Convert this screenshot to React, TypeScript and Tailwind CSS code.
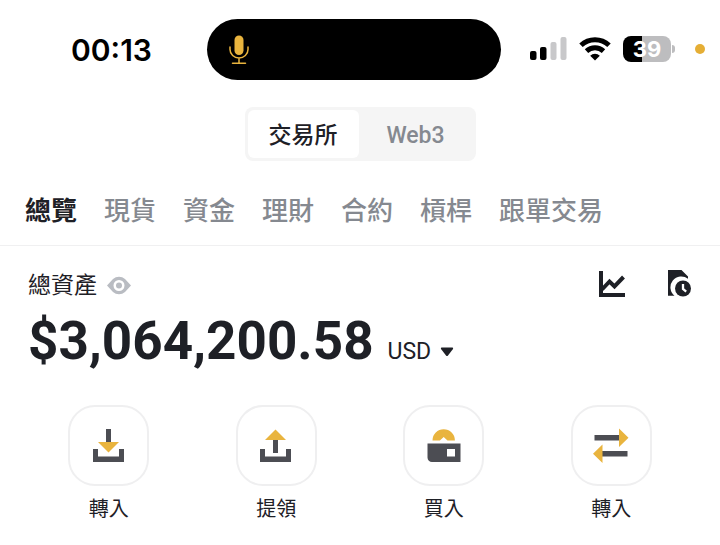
import type { ReactNode } from "react";

const TABS = ["總覽", "現貨", "資金", "理財", "合約", "槓桿", "跟單交易"];

const ACTIONS: { id: string; label: string; icon: ReactNode }[] = [
  { id: "deposit", label: "轉入", icon: <DepositIcon /> },
  { id: "withdraw", label: "提領", icon: <WithdrawIcon /> },
  { id: "buy", label: "買入", icon: <BuyIcon /> },
  { id: "transfer", label: "轉入", icon: <TransferIcon /> },
];

function MicIcon() {
  return (
    <svg className="w-5 h-[30px]" viewBox="0 0 20 30" fill="none" stroke="#e9b43e" strokeWidth="1.5" strokeLinecap="round" aria-hidden={true}>
      <rect x="5.500" y="0.500" width="9" height="19.500" rx="4.500" fill="#e9b43e" stroke="none" />
      <path d="M1 12v2.500a9 8.500 0 0 0 18 0V12M10 23v5M3.500 28.200h13" />
    </svg>
  );
}

function SignalIcon() {
  return (
    <svg className="w-[37px] h-6" viewBox="0 0 37 24" aria-hidden={true}>
      <rect x="0" y="14" width="6.500" height="9" rx="2" />
      <rect x="10" y="10" width="6.500" height="13" rx="2" />
      <rect x="20.500" y="5" width="6" height="18" rx="2" fill="#c8c8ca" />
      <rect x="30.500" y="0" width="6" height="23" rx="2" fill="#c8c8ca" />
    </svg>
  );
}

function WifiIcon() {
  return (
    <svg className="w-8 h-6" viewBox="0 0 32 24" fill="none" stroke="#000" strokeWidth="5" aria-hidden={true}>
      <path d="M2 8.300a20.300 20.300 0 0 1 28 0" />
      <path d="M7.500 14.200a12.500 12.500 0 0 1 17 0" />
      <path d="M16 23.500l-4.800-4.700a6.800 6.800 0 0 1 9.600 0z" fill="#000" stroke="none" />
    </svg>
  );
}

function EyeIcon() {
  return (
    <svg className="w-6 h-5" viewBox="0 0 24 20" aria-hidden={true}>
      <path fill="#b9bcc2" fillRule="evenodd" d="M0 9.500L6 3a8.800 8.800 0 0 1 12 0L24 9.500 18 16a8.800 8.800 0 0 1-12 0zM12 4a5.500 5.500 0 1 0 0 11a5.500 5.500 0 0 0 0-11z" />
      <circle cx="12" cy="9.500" r="3" fill="#b9bcc2" />
    </svg>
  );
}

function ChartIcon() {
  return (
    <svg className="w-[26px] h-[26px]" viewBox="0 0 26 26" fill="none" stroke="#1e2026" strokeWidth="4" aria-hidden={true}>
      <path d="M2 0v24h24" />
      <path d="M3 18.500l7.500-8 5 5L24.500 6" strokeWidth="4" />
    </svg>
  );
}

function HistoryIcon() {
  return (
    <svg className="w-6 h-[27px]" viewBox="0 0 24 27" aria-hidden={true}>
      <path fill="#1e2026" d="M0 0h13.500L20 6.500v2.300A9.700 9.700 0 0 0 6.500 25.700H0z" />
      <circle cx="15" cy="18.500" r="8" fill="#1e2026" />
      <path d="M15 14v5l3.200 2.600" fill="none" stroke="#fff" strokeWidth="2.300" />
    </svg>
  );
}

function DepositIcon() {
  return (
    <svg className="w-9 h-9" viewBox="0 0 36 36" aria-hidden={true}>
      <path fill="#4c4d53" d="M15 1h5v14h-5zM2 21h5v7.500h21V21h5v13H2z" />
      <path fill="#e9b43e" d="M7 14h21L17.500 24.500z" />
    </svg>
  );
}

function WithdrawIcon() {
  return (
    <svg className="w-9 h-9" viewBox="0 0 36 36" aria-hidden={true}>
      <path fill="#4c4d53" d="M15 11h5v14h-5zM2 21h5v7.500h21V21h5v13H2z" />
      <path fill="#e9b43e" d="M7 12h21L17.500 1.500z" />
    </svg>
  );
}

function BuyIcon() {
  return (
    <svg className="w-9 h-9" viewBox="0 0 36 36" aria-hidden={true}>
      <path fill="#e9b43e" d="M6.500 12.500a11.200 11.200 0 0 1 22.400 0h-7.400L17.700 9l-3.800 3.500z" />
      <path fill="#4c4d53" fillRule="evenodd" d="M1.500 15.500h33v18.500H6a4.500 4.500 0 0 1-4.500-4.500zM21 21v7.500h8V21z" />
    </svg>
  );
}

function TransferIcon() {
  return (
    <svg className="w-9 h-9" viewBox="0 0 36 36" aria-hidden={true}>
      <path fill="#4c4d53" d="M1.500 7h26v5.500h-26zM8.500 23h26v5.500h-26z" />
      <path fill="#e9b43e" d="M26 0.500v18.500L35.500 9.800zM9.500 16.500V35L0 25.800z" />
    </svg>
  );
}

function StatusBar() {
  return (
    <header className="grid grid-cols-[1fr_294px_1fr] items-center pt-[19px] pr-3 text-black">
      <time className="pl-[71px] font-[Inter,sans-serif] text-[30px] leading-9 font-semibold">00:13</time>
      <div className="flex items-center h-[61px] rounded-full bg-black pl-[22px]">
        <MicIcon />
      </div>
      <div className="flex items-center justify-end gap-3 pr-[3px] pb-[2px]">
        <SignalIcon />
        <WifiIcon />
        <div className="flex items-center mr-2">
          <span className="flex items-center justify-center w-12 h-[26px] rounded-lg bg-linear-to-r from-black from-40% to-[#bdbdbf] to-40% font-[Inter,sans-serif] text-[22px] leading-6 font-bold text-white">
            39
          </span>
          <span className="w-[3px] h-2 ml-px rounded-r-full bg-[#bdbdbf]" />
        </div>
        <span className="size-[10px] rounded-full bg-[#e5ae35]" />
      </div>
    </header>
  );
}

function ModeSwitch() {
  return (
    <div className="flex w-fit mx-auto mt-[27px] p-[3px] rounded-lg bg-[#f5f5f5] text-[23px] font-medium">
      <button type="button" aria-pressed={true} className="w-[111px] h-12 pt-1 rounded-md bg-white">交易所</button>
      <button type="button" aria-pressed={false} className="w-[114px] h-12 pt-1 text-[#858990]">Web3</button>
    </div>
  );
}

function AccountTabs() {
  return (
    <nav aria-label="帳戶" className="mt-[30px] pb-[14px] border-b border-[#f0f0f1]">
      <ul className="flex gap-[27px] px-[25px] text-[26px] leading-10 whitespace-nowrap">
        {TABS.map((tab, i) => (
          <li key={tab}>
            <a href="#" className={i === 0 ? "font-bold" : "font-medium text-[#858990]"}>{tab}</a>
          </li>
        ))}
      </ul>
    </nav>
  );
}

function Balance() {
  return (
    <section className="px-7 pt-5">
      <div className="flex items-center justify-between">
        <div className="flex items-center gap-[10px]">
          <h1 className="text-[23px] leading-10">總資產</h1>
          <button type="button" aria-label="隱藏資產"><EyeIcon /></button>
        </div>
        <div className="flex items-center gap-[43px] pb-[5px]">
          <button type="button" aria-label="圖表"><ChartIcon /></button>
          <button type="button" aria-label="歷史記錄"><HistoryIcon /></button>
        </div>
      </div>
      {/* Amount */}
      <div className="flex items-baseline gap-[14px]">
        <p className="text-[53px] leading-[70px] font-bold">$3,064,200.58</p>
        <div className="relative">
          <select aria-label="幣種" className="appearance-none w-[66px] text-[23px] leading-8">
            <option>USD</option>
          </select>
          <svg className="absolute right-0 top-[11px] w-[14px] h-[10px] pointer-events-none" viewBox="0 0 14 10" fill="#1e2026" aria-hidden={true}>
            <path d="M1.500 0.500h11q1 .3.500 1.500L8 8.500q-1 1-2 0L1 2Q.5.800 1.500.500z" />
          </svg>
        </div>
      </div>
    </section>
  );
}

function Actions() {
  return (
    <ul className="grid grid-cols-4 px-[25px] mt-[29px]">
      {ACTIONS.map((action) => (
        <li key={action.id} className="flex justify-center">
          <button type="button" className="flex flex-col items-center gap-[9px] text-xl leading-7">
            <span className="flex items-center justify-center size-[81px] rounded-[27px] border-2 border-[#efeff0]">
              {action.icon}
            </span>
            {action.label}
          </button>
        </li>
      ))}
    </ul>
  );
}

export default function App() {
  return (
    <main className="min-h-screen bg-white pb-5 font-[Roboto,'Noto_Sans_CJK_TC',sans-serif] text-[#1e2026]">
      <StatusBar />
      <ModeSwitch />
      <AccountTabs />
      <Balance />
      <Actions />
    </main>
  );
}
